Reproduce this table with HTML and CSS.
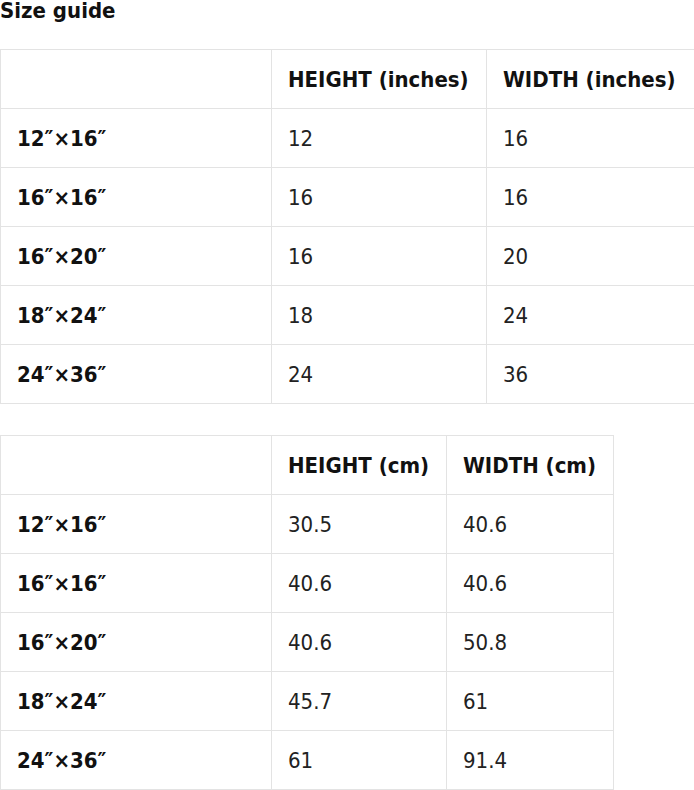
FILE: index.html
```html
<!DOCTYPE html>
<html>
<head>
<meta charset="utf-8">
<link rel="stylesheet" href="styles.css">
</head>
<body>
<h2 class="title">Size guide</h2>
<table class="size-table size-table--inches">
  <colgroup><col class="c1"><col class="c2"><col class="c3"></colgroup>
  <tr><th></th><th>HEIGHT (inches)</th><th>WIDTH (inches)</th></tr>
  <tr><th>12″×16″</th><td>12</td><td>16</td></tr>
  <tr><th>16″×16″</th><td>16</td><td>16</td></tr>
  <tr><th>16″×20″</th><td>16</td><td>20</td></tr>
  <tr><th>18″×24″</th><td>18</td><td>24</td></tr>
  <tr><th>24″×36″</th><td>24</td><td>36</td></tr>
</table>
<table class="size-table size-table--cm">
  <colgroup><col class="c1"><col class="c2"><col class="c3"></colgroup>
  <tr><th></th><th>HEIGHT (cm)</th><th>WIDTH (cm)</th></tr>
  <tr><th>12″×16″</th><td>30.5</td><td>40.6</td></tr>
  <tr><th>16″×16″</th><td>40.6</td><td>40.6</td></tr>
  <tr><th>16″×20″</th><td>40.6</td><td>50.8</td></tr>
  <tr><th>18″×24″</th><td>45.7</td><td>61</td></tr>
  <tr><th>24″×36″</th><td>61</td><td>91.4</td></tr>
</table>
</body>
</html>
```
FILE: styles.css
```css
html, body {
  margin: 0;
  padding: 0;
  background: #fff;
}
body {
  font-family: "DejaVu Sans Condensed", "DejaVu Sans", sans-serif;
  font-size: 22px;
  color: #222;
}
.title {
  margin: 0 0 27px 0;
  font-size: 22px;
  line-height: 22px;
  font-weight: bold;
  color: #111;
}
.size-table {
  border-collapse: collapse;
  table-layout: fixed;
}
.size-table th,
.size-table td {
  border: 1px solid #e3e3e3;
  padding: 17px 16px 15px;
  line-height: 26px;
  text-align: left;
  white-space: nowrap;
}
.size-table th {
  font-weight: bold;
  color: #111;
}
.size-table td {
  font-weight: normal;
  color: #222;
}
.size-table--inches {
  width: 694px;
  margin-bottom: 31px;
}
.size-table--inches .c1 { width: 271px; }
.size-table--inches .c2 { width: 215px; }
.size-table--inches .c3 { width: 208px; }
.size-table--cm {
  width: 613px;
}
.size-table--cm .c1 { width: 271px; }
.size-table--cm .c2 { width: 175px; }
.size-table--cm .c3 { width: 167px; }
```
